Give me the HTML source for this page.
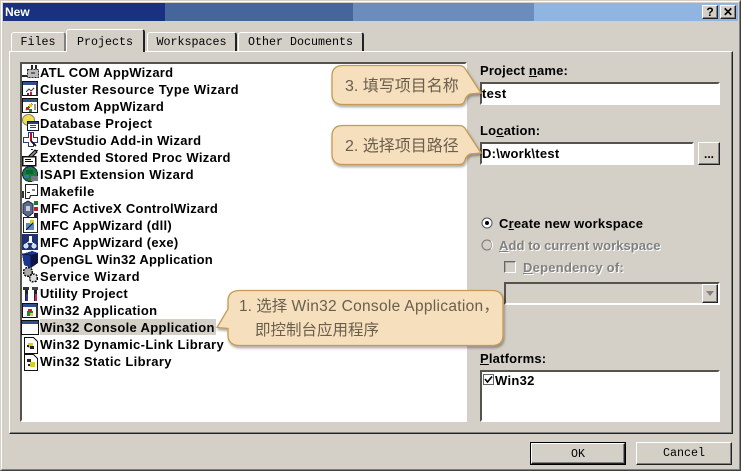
<!DOCTYPE html>
<html><head><meta charset="utf-8">
<style>
html,body{margin:0;padding:0}
body{width:741px;height:471px;overflow:hidden;position:relative;background:#d4d0c8;font-family:"Liberation Sans",sans-serif}
.a{position:absolute}
.t{position:absolute;font:bold 13px/17px "Liberation Sans","DejaVu Sans",sans-serif;color:#000;white-space:nowrap;letter-spacing:.2px}
.sunk{position:absolute;box-sizing:border-box;background:#fff;border:2px solid;border-color:#55534e #fff #fff #55534e}
.tab{position:absolute;box-sizing:border-box;background:#d4d0c8;border-top:1px solid #fff;border-left:1px solid #fff;border-right:2px solid #222;border-radius:3px 3px 0 0;text-align:center;font:11.67px/16px "Liberation Mono",monospace}
.btn{position:absolute;box-sizing:border-box;background:#d4d0c8;border:1px solid;border-color:#fff #222 #222 #fff;box-shadow:inset -1px -1px 0 #808080;text-align:center;font:11.67px/20px "Liberation Mono",monospace}
u{text-decoration:underline}
.g{color:#808080;text-shadow:1px 1px 0 #fff}
svg{position:absolute;overflow:visible}
</style></head><body>
<!-- outer frame -->
<div class="a" style="left:0;top:0;width:739px;height:469px;border:1px solid;border-color:#d4d0c8 #404040 #404040 #d4d0c8"></div>
<div class="a" style="left:1px;top:1px;width:737px;height:467px;border:1px solid;border-color:#fff #808080 #808080 #fff"></div>
<!-- title -->
<div class="a" style="left:3px;top:3px;width:162px;height:18px;background:#1a3080"></div>
<div class="a" style="left:165px;top:3px;width:188px;height:18px;background:#45659b"></div>
<div class="a" style="left:353px;top:3px;width:181px;height:18px;background:#6b8cbd"></div>
<div class="a" style="left:534px;top:3px;width:204px;height:18px;background:#8fb5e0"></div>
<div class="a" style="left:5px;top:4px;font:bold 12px/17px 'Liberation Sans',sans-serif;color:#fff">New</div>
<div class="btn" style="left:702px;top:5px;width:16px;height:14px;font:bold 12px/13px 'Liberation Sans',sans-serif">?</div>
<div class="btn" style="left:720px;top:5px;width:16px;height:14px;font:bold 12px/12px 'Liberation Sans',sans-serif">✕</div>
<!-- tab panel -->
<div class="a" style="left:9px;top:51px;width:722px;height:381px;border:1px solid;border-color:#fff #222 #222 #fff;box-shadow:inset -1px -1px 0 #808080"></div>
<div class="tab" style="left:11px;top:32px;width:55px;height:19px;padding-top:1px;border-right-color:#808080;">Files</div>
<div class="tab" style="left:66px;top:29px;width:79px;height:23px;padding-top:4px;border-left:1px solid #fff;z-index:2">Projects</div>
<div class="tab" style="left:147px;top:32px;width:90px;height:19px;padding-top:1px">Workspaces</div>
<div class="tab" style="left:238px;top:32px;width:126px;height:19px;padding-top:1px">Other Documents</div>
<!-- list -->
<div class="sunk" style="left:20px;top:62px;width:447px;height:360px"></div>
<div class="a" style="left:40px;top:319px;width:176px;height:16px;background:#d4d0c8"></div>
<div class="t" style="left:40px;top:64px;letter-spacing:.26px">ATL COM AppWizard</div>
<div class="t" style="left:40px;top:81px;letter-spacing:.44px">Cluster Resource Type Wizard</div>
<div class="t" style="left:40px;top:98px;letter-spacing:.3px">Custom AppWizard</div>
<div class="t" style="left:40px;top:115px;letter-spacing:.43px">Database Project</div>
<div class="t" style="left:40px;top:132px;letter-spacing:.29px">DevStudio Add-in Wizard</div>
<div class="t" style="left:40px;top:149px;letter-spacing:.33px">Extended Stored Proc Wizard</div>
<div class="t" style="left:40px;top:166px;letter-spacing:.37px">ISAPI Extension Wizard</div>
<div class="t" style="left:40px;top:183px;letter-spacing:.43px">Makefile</div>
<div class="t" style="left:40px;top:200px;letter-spacing:.27px">MFC ActiveX ControlWizard</div>
<div class="t" style="left:40px;top:217px;letter-spacing:.29px">MFC AppWizard (dll)</div>
<div class="t" style="left:40px;top:234px;letter-spacing:.29px">MFC AppWizard (exe)</div>
<div class="t" style="left:40px;top:251px;letter-spacing:.26px">OpenGL Win32 Application</div>
<div class="t" style="left:40px;top:268px;letter-spacing:.55px">Service Wizard</div>
<div class="t" style="left:40px;top:285px;letter-spacing:.28px">Utility Project</div>
<div class="t" style="left:40px;top:302px;letter-spacing:.31px">Win32 Application</div>
<div class="t" style="left:40px;top:319px;letter-spacing:.31px">Win32 Console Application</div>
<div class="t" style="left:40px;top:336px;letter-spacing:.36px">Win32 Dynamic-Link Library</div>
<div class="t" style="left:40px;top:353px;letter-spacing:.35px">Win32 Static Library</div>
<!-- list icons -->
<svg style="left:22px;top:64px" width="18" height="306" viewBox="0 0 18 306" shape-rendering="crispEdges">
<!-- ATL -->
<rect x="5.500" y="5.500" width="11" height="8" fill="#bbb" stroke="#222" stroke-dasharray="2 1"/><rect x="9" y="1" width="2" height="4" fill="#222"/><rect x="13" y="1" width="2" height="4" fill="#222"/><rect x="0" y="11" width="5" height="2" fill="#222"/><rect x="9" y="8" width="4" height="2" fill="#666"/>
<!-- Cluster -->
<rect x="0.500" y="17.500" width="15" height="14" fill="#fff" stroke="#111"/><rect x="1" y="18" width="14" height="3" fill="#2f4f8f"/><rect x="14" y="19" width="2" height="13" fill="#333"/><path d="M4 28l3-3 2 2 3-3" fill="none" stroke="#444"/><rect x="8" y="28" width="2" height="3" fill="#c22"/><rect x="5" y="29" width="2" height="2" fill="#24408c"/>
<!-- Custom -->
<rect x="0.500" y="34.500" width="15" height="14" fill="#fff" stroke="#111"/><rect x="1" y="35" width="14" height="3" fill="#2f4f8f"/><path d="M4 46l6-6" stroke="#111" stroke-width="2"/><rect x="4" y="43" width="3" height="3" fill="#c22"/><rect x="7" y="40" width="3" height="3" fill="#dc2"/><rect x="7" y="45" width="3" height="3" fill="#1a8a2a"/><rect x="12" y="40" width="2" height="6" fill="#999"/>
<!-- Database -->
<ellipse cx="6.500" cy="56" rx="6" ry="5.500" fill="#efe04a" stroke="#887"/><rect x="5.500" y="57.500" width="11" height="9" fill="#fff" stroke="#113"/><rect x="6" y="58" width="10" height="2" fill="#24408c"/><rect x="8" y="61" width="6" height="1" fill="#445"/><rect x="8" y="63" width="6" height="1" fill="#445"/>
<!-- DevStudio -->
<path d="M6.500 68.500h5v5h4v5h-4v4h-5v-4h-5v-5h5z" fill="#fff" stroke="#2a3a6a"/><rect x="8" y="69" width="2" height="8" fill="#c02"/><path d="M9 77l5 5" stroke="#111" stroke-width="2"/>
<!-- Extended -->
<rect x="0.500" y="92.500" width="13" height="9" fill="#fff" stroke="#111" stroke-width="1.500"/><rect x="3" y="95" width="6" height="1" fill="#111"/><rect x="3" y="97" width="8" height="1" fill="#111"/><path d="M7 92l6-6 2 2-5 5z" fill="#888" stroke="#111"/><rect x="9" y="85" width="2" height="1" fill="#222"/><rect x="14" y="86" width="2" height="1" fill="#222"/>
<!-- ISAPI -->
<circle cx="8" cy="110" r="7.500" fill="#1f7a3a" stroke="#1a2350"/><rect x="4" y="106" width="7" height="4" fill="#063"/><rect x="2" y="111" width="5" height="3" fill="#2a7ab0"/><rect x="9" y="112" width="7" height="5" fill="#778"/>
<!-- Makefile -->
<path d="M3.500 120.500h12v11h-7l-1 3h-4z" fill="#fff" stroke="#222"/><rect x="0" y="127" width="2" height="7" fill="#333"/><rect x="10" y="125" width="3" height="2" fill="#888"/><rect x="5" y="128" width="3" height="1" fill="#222"/>
<!-- ActiveX -->
<path d="M6 137l5 3v9l-5 4-5-4v-9z" fill="#5a6a88" stroke="#1a2350"/><rect x="4" y="142" width="4" height="5" fill="#ccd"/><rect x="12" y="137" width="4" height="4" fill="#1a7a2a"/><rect x="12" y="143" width="4" height="4" fill="#b22"/><rect x="12" y="149" width="4" height="4" fill="#223"/>
<!-- AppWizard dll -->
<rect x="1.500" y="153.500" width="14" height="15" fill="#fff" stroke="#222"/><rect x="4" y="159" width="8" height="7" fill="#5a8ac0"/><rect x="8" y="156" width="4" height="4" fill="#dc2"/><path d="M4 166l7-7" stroke="#111"/>
<!-- AppWizard exe -->
<rect x="0" y="170" width="16" height="16" fill="#1e3272"/><circle cx="4" cy="182" r="2.500" fill="#cde"/><circle cx="12" cy="182" r="2.500" fill="#cde"/><rect x="7" y="172" width="3" height="7" fill="#fff"/><path d="M4 180l4-3 4 3" fill="none" stroke="#fff"/>
<!-- OpenGL -->
<path d="M0 190l10-3 6 2v10l-7 5-7-3z" fill="#1c3690"/><path d="M9 191l7-2v10l-7 5z" fill="#0b1648"/><path d="M0 190l9 1v13" fill="none" stroke="#0b1648"/>
<!-- Service -->
<circle cx="6" cy="208" r="4.500" fill="#aaa" stroke="#111" stroke-width="1.500" stroke-dasharray="2 1"/><circle cx="11.500" cy="214" r="4" fill="#ddd" stroke="#111" stroke-width="1.500" stroke-dasharray="2 1"/>
<!-- Utility -->
<rect x="1" y="223" width="6" height="3" fill="#333"/><rect x="3" y="226" width="3" height="11" fill="#222"/><rect x="4" y="230" width="2" height="7" fill="#2a3a9a"/><rect x="10" y="223" width="6" height="3" fill="#444"/><rect x="12" y="226" width="3" height="11" fill="#222"/><rect x="13" y="230" width="2" height="7" fill="#c0247a"/>
<!-- Win32 app -->
<rect x="0.500" y="239.500" width="15" height="14" fill="#fff" stroke="#111"/><rect x="1" y="240" width="14" height="3" fill="#2f4f8f"/><rect x="14" y="241" width="2" height="13" fill="#333"/><rect x="5" y="247" width="6" height="5" fill="#1a8a2a"/><rect x="6" y="245" width="4" height="3" fill="#c22"/><rect x="8" y="249" width="3" height="3" fill="#dc2"/>
<!-- Console -->
<rect x="-0.500" y="256.500" width="17" height="14" fill="#fff" stroke="#111"/><rect x="0" y="257" width="16" height="3" fill="#2f4f8f"/>
<!-- Dll -->
<path d="M2.500 273.500h9l4 4v12h-13z" fill="#fff" stroke="#111"/><rect x="6" y="279" width="5" height="5" fill="#dc2"/><rect x="8" y="282" width="4" height="3" fill="#222"/><rect x="5" y="281" width="2" height="2" fill="#222"/>
<!-- Static -->
<path d="M2.500 290.500h9l4 4v12h-13z" fill="#fff" stroke="#111"/><rect x="5" y="295" width="4" height="3" fill="#222"/><rect x="8" y="298" width="5" height="5" fill="#dc2"/><rect x="6" y="300" width="2" height="2" fill="#222"/>
</svg>
<!-- right -->
<div class="t" style="left:480px;top:62px;letter-spacing:.15px">Project <u>n</u>ame:</div>
<div class="sunk" style="left:480px;top:82px;width:240px;height:23px"></div>
<div class="t" style="left:482px;top:85px;letter-spacing:.35px">test</div>
<div class="t" style="left:480px;top:122px;letter-spacing:.2px">Lo<u>c</u>ation:</div>
<div class="sunk" style="left:480px;top:142px;width:214px;height:23px"></div>
<div class="t" style="left:482px;top:145px;letter-spacing:.25px">D:\work\test</div>
<div class="btn" style="left:698px;top:142px;width:22px;height:23px;font:bold 12px/22px 'Liberation Sans',sans-serif">...</div>
<svg style="left:481px;top:217px" width="13" height="36" viewBox="0 0 13 36">
<circle cx="6" cy="6" r="5" fill="#fff" stroke="#555"/><circle cx="6" cy="6" r="2" fill="#000"/>
<circle cx="6" cy="28" r="5" fill="#d4d0c8" stroke="#777"/><path d="M10 32a6 6 0 0 0 0-8" stroke="#fff" fill="none"/>
</svg>
<div class="t" style="left:499px;top:215px;letter-spacing:.2px">C<u>r</u>eate new workspace</div>
<div class="t g" style="left:499px;top:237px;letter-spacing:.05px"><u>A</u>dd to current workspace</div>
<div class="a" style="left:504px;top:261px;width:10px;height:10px;border:1px solid;border-color:#666 #fff #fff #666;box-shadow:inset 1px 1px 0 #aaa"></div>
<div class="t g" style="left:523px;top:259px;letter-spacing:.25px"><u>D</u>ependency of:</div>
<div class="a" style="left:504px;top:282px;width:216px;height:23px;box-sizing:border-box;border:2px solid;border-color:#55534e #fff #fff #55534e"></div>
<div class="btn" style="left:702px;top:284px;width:16px;height:19px"></div>
<svg style="left:706px;top:291px" width="8" height="5"><path d="M0 0h8L4 5z" fill="#808080"/></svg>
<div class="t" style="left:480px;top:350px;letter-spacing:.2px"><u>P</u>latforms:</div>
<div class="sunk" style="left:480px;top:370px;width:240px;height:52px"></div>
<div class="a" style="left:483px;top:374px;width:9px;height:9px;border:1px solid #666;background:#fff"></div>
<svg style="left:484px;top:375px" width="10" height="10"><path d="M1 4l2.500 3L8 1.500" fill="none" stroke="#000" stroke-width="1.600"/></svg>
<div class="t" style="left:495px;top:372px;letter-spacing:.3px">Win32</div>
<!-- buttons -->
<div class="a" style="left:530px;top:442px;width:96px;height:23px;box-sizing:border-box;border:1px solid #000"></div>
<div class="btn" style="left:531px;top:443px;width:94px;height:21px;">OK</div>
<div class="btn" style="left:636px;top:442px;width:96px;height:23px;line-height:21px">Cancel</div>
<!-- callouts -->
<svg style="left:0;top:0" width="741" height="471" viewBox="0 0 741 471">
<defs><filter id="s" x="-5%" y="-10%" width="110%" height="130%"><feDropShadow dx="1" dy="2" stdDeviation="1.200" flood-color="#000" flood-opacity=".35"/></filter></defs>
<g fill="#f5dfbd" stroke="#c59a52" stroke-width="1.300" filter="url(#s)">
<path d="M343 65.500H459Q464 65.500 466 70L481 93 470 94Q466 96 465 100 464 104.500 459 104.500H343Q332 104.500 332 94V76Q332 65.500 343 65.500Z"/>
<path d="M343 125.500H459Q464 125.500 466 130L481 153 470 154Q466 156 465 160 464 164.500 459 164.500H343Q332 164.500 332 154V136Q332 125.500 343 125.500Z"/>
<path d="M240 290.500H492Q503 290.500 503 301V335Q503 345.500 492 345.500H240Q228 345.500 228 335V328.500L217 327.500 228 309V301Q228 290.500 240 290.500Z"/>
</g>
<g font-family="'Liberation Sans','Noto Sans CJK SC',sans-serif" font-size="16" fill="#6a5e4d">
<text x="345" y="91">3. 填写项目名称</text>
<text x="345" y="151">2. 选择项目路径</text>
<text x="239" y="311" font-size="15.500">1. 选择 <tspan letter-spacing=".3">Win32 Console Application</tspan>，</text>
<text x="255" y="335" font-size="15.500">即控制台应用程序</text>
</g>
</svg>
</body></html>
